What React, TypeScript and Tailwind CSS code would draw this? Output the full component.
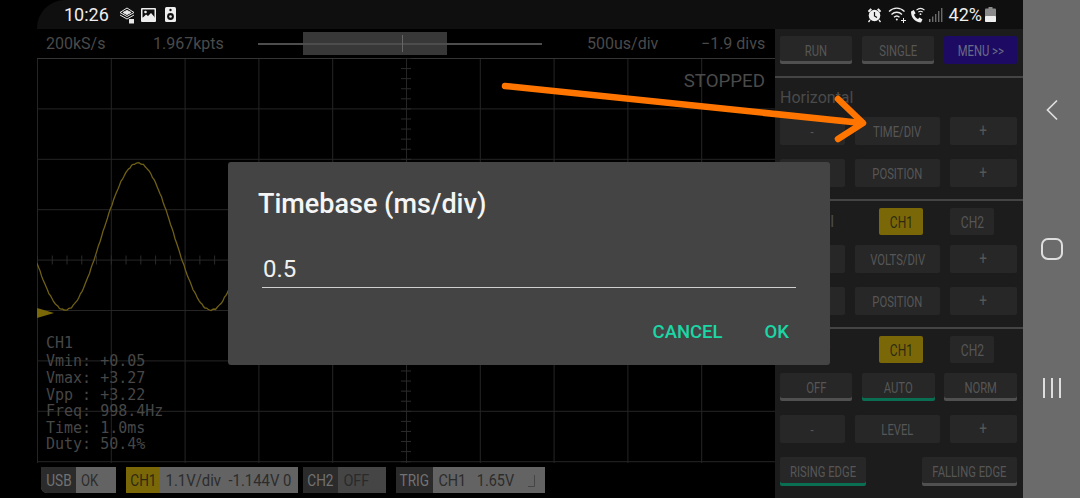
import React from "react";

const gridX = Array.from({ length: 11 }, (_, i) => 0.5 + i * 73.8);
const gridY = Array.from({ length: 9 }, (_, i) => 0.5 + i * 50.4);
const ticksX = Array.from({ length: 51 }, (_, i) => 0.5 + i * 14.76);
const ticksY = Array.from({ length: 41 }, (_, i) => 0.5 + i * 10.08);

const wave = (() => {
  const pts: string[] = [];
  for (let x = 37; x <= 232; x += 1.5) {
    const noise = Math.sin(x * 3.1) * 0.5 + Math.sin(x * 1.7) * 0.3;
    const y = 236.5 - 73.5 * Math.cos((2 * Math.PI * (x - 138)) / 146) + noise;
    pts.push(`${(x - 37).toFixed(1)},${(y - 58).toFixed(1)}`);
  }
  return pts.join(" ");
})();

function Btn({ w, h = "h-[28px]", children, active, line, purple, grow }: { w: string; h?: string; children?: React.ReactNode; active?: boolean; line?: "gray" | "green"; purple?: boolean; grow?: boolean }) {
  const tone = active ? "bg-[#7a6808] text-[#2e2a10]" : purple ? "bg-[#1c0a63] text-[#6b6b85]" : "bg-[#272727] text-[#565656]";
  const border = line === "gray" ? "shadow-[inset_0_-3px_0_#505050]" : line === "green" ? "shadow-[inset_0_-3px_0_#0a6f52]" : "";
  return (
    <div className={`${w} ${h} ${tone} ${border} ${grow ? "ml-auto" : ""} flex items-center justify-center rounded-[2px] pt-[2px] text-[15px]`}>
      <span className="inline-block scale-x-[0.75] whitespace-nowrap">{children}</span>
    </div>
  );
}

function Row3({ label }: { label: string }) {
  return (
    <div className="flex justify-between">
      <Btn w="w-[65px]">-</Btn>
      <Btn w="w-[85px]">{label}</Btn>
      <Btn w="w-[67px]"><span className="text-[18px] leading-[18px]">+</span></Btn>
    </div>
  );
}

function ChRow({ label }: { label: string }) {
  return (
    <div className="flex h-[27px] items-center">
      <div className="w-[99px] text-[16px] text-[#4a4a4a]">{label}</div>
      <Btn w="w-[44px]" h="h-[27px]" active><span className="text-[16px]">CH1</span></Btn>
      <div className="w-[27px]" />
      <Btn w="w-[44px]" h="h-[27px]"><span className="text-[16px]">CH2</span></Btn>
    </div>
  );
}

const Sep = () => <div className="h-[2px] bg-[#444444]" />;

function Tag({ w, children, active, corner }: { w: string; children: React.ReactNode; active?: boolean; corner?: boolean }) {
  return (
    <div className={`${w} ${active ? "bg-[#7a6808] text-[#2e2a10]" : "bg-[#2b2b2b] text-[#727272]"} ${corner ? "rounded-bl-[6px]" : ""} shrink-0 text-center text-[16px]`}>
      <span className="inline-block scale-x-[0.85]">{children}</span>
    </div>
  );
}

function StatusLeftIcons() {
  return (
    <div className="ml-[10px] flex items-center">
      <svg width="16" height="18" viewBox="0 0 16 18" fill="none" stroke="#e8e8e8" strokeWidth="1">
        <path d="M8 2 15 6.5 8 10.5 1 6.5Z" />
        <path d="M4 6.5 8 4.5 12 6.5 8 8.5Z" fill="#e8e8e8" />
        <path d="M1 9 8 13 15 9" />
        <rect x="10" y="13" width="5" height="4.5" fill="#e8e8e8" stroke="none" />
      </svg>
      <svg className="ml-[6px]" width="15" height="14" viewBox="0 0 15 14">
        <rect width="15" height="14" rx="1" fill="#eeeeee" />
        <rect x="1.5" y="1.5" width="12" height="8" fill="#0f0f0f" />
        <circle cx="4.5" cy="4" r="1.3" fill="#eeeeee" />
        <path d="M1.5 10 5 6.5 7 8 10 5 13.5 9V11H1.5Z" fill="#eeeeee" />
      </svg>
      <svg className="ml-[9px]" width="11" height="15" viewBox="0 0 11 15">
        <rect width="11" height="15" rx="1.5" fill="#eeeeee" />
        <circle cx="5.5" cy="3" r="1.2" fill="#0f0f0f" />
        <circle cx="5.5" cy="9.5" r="3.4" fill="#0f0f0f" />
        <circle cx="5.5" cy="9.5" r="1.3" fill="#eeeeee" />
      </svg>
    </div>
  );
}

function StatusRightIcons() {
  return (
    <div className="flex items-center">
      <svg width="15" height="16" viewBox="0 0 15 16" fill="none">
        <circle cx="7.5" cy="8.5" r="5.8" fill="#eeeeee" />
        <path d="M7.5 5V9L10 10.5" stroke="#0f0f0f" strokeWidth="1.2" />
        <path d="M0.8 4 3.5 1.2 5 2.5 2.2 5.5ZM14.2 4 11.5 1.2 10 2.5 12.8 5.5Z" fill="#eeeeee" />
        <path d="M3 13 1.5 15M12 13l1.5 2" stroke="#eeeeee" strokeWidth="1.3" />
      </svg>
      <svg className="ml-[6px]" width="19" height="17" viewBox="0 0 19 17" fill="none" stroke="#eeeeee" strokeWidth="1.3">
        <path d="M1 5.5C5.5 1 12 1 16.5 5.5" />
        <path d="M3.5 8.5C6.5 5.5 11 5.5 14 8.5" />
        <path d="M6 11.3C7.8 9.6 9.8 9.6 11.5 11.3" />
        <circle cx="8.8" cy="13.6" r="1" fill="#eeeeee" stroke="none" />
        <path d="M13 14.5H18M15.5 12V17" strokeWidth="1" />
      </svg>
      <svg className="ml-[3px]" width="15" height="16" viewBox="0 0 15 16" fill="none">
        <path d="M1 4.5C1 11 5 15 11 15.5L12.5 12.5 9.5 10.5 8 12C6 11 4.8 9.6 4 7.8L5.6 6.3 3.8 3Z" fill="#eeeeee" />
        <path d="M6.5 3.2C9 1 12 1 14.5 3.2M8.3 5.2C9.8 3.9 11.3 3.9 12.8 5.2" stroke="#eeeeee" strokeWidth="1.1" />
        <circle cx="10.5" cy="7.2" r="0.9" fill="#eeeeee" />
      </svg>
      <svg className="ml-[4px]" width="14" height="14" viewBox="0 0 14 14">
        <rect x="0" y="11" width="1.4" height="3" fill="#8a8a8a" />
        <rect x="3" y="8.5" width="1.4" height="5.5" fill="#6a6a6a" />
        <rect x="6" y="6" width="1.4" height="8" fill="#6a6a6a" />
        <rect x="9" y="3" width="1.4" height="11" fill="#6a6a6a" />
        <rect x="12" y="0" width="1.4" height="14" fill="#6a6a6a" />
      </svg>
      <span className="ml-[6px] text-[18px] leading-none text-[#eeeeee]">42%</span>
      <svg className="ml-[3px]" width="11" height="15" viewBox="0 0 11 15">
        <rect x="3.5" y="0" width="4" height="2" fill="#8a8a8a" />
        <rect x="0" y="1.5" width="11" height="13.5" rx="1" fill="#8a8a8a" />
        <rect x="0" y="9" width="11" height="6" rx="1" fill="#eeeeee" />
      </svg>
    </div>
  );
}

export default function App() {
  return (
    <div className="relative flex h-[498px] w-[1080px] overflow-hidden bg-black font-['Roboto',sans-serif]">
      <div className="flex w-[1023px] flex-col">
        {/* status bar */}
        <div className="ml-[37px] flex h-[29px] shrink-0 items-center rounded-tl-[28px] bg-[#0f0f0f] pl-[27px] pr-[27px]">
          <span className="text-[18px] leading-none text-[#eeeeee]">10:26</span>
          <StatusLeftIcons />
          <div className="ml-auto">
            <StatusRightIcons />
          </div>
        </div>

        <div className="flex min-h-0 flex-1">
          {/* scope */}
          <div className="flex w-[775px] shrink-0 flex-col pl-[37px]">
            <div className="flex h-[29px] shrink-0 items-center text-[16px] text-[#4a4a4a]">
              <span className="ml-[9px] w-[107px]">200kS/s</span>
              <span className="w-[105px]">1.967kpts</span>
              <div className="relative h-[23px] w-[284px]">
                <div className="absolute left-[45px] top-0 h-[23px] w-[144px] bg-[#383838]" />
                <div className="absolute left-0 right-0 top-[10.5px] h-[2px] bg-[#4d4d4d]" />
                <div className="absolute left-[144px] top-[3px] h-[17px] w-[1px] bg-[#666666]" />
              </div>
              <span className="ml-[45px] w-[114px]">500us/div</span>
              <span>−1.9 divs</span>
            </div>

            <div className="relative h-[405px] shrink-0">
              <svg className="block" width="738" height="405" viewBox="0 0 738 405">
                {gridX.map((x) => (
                  <line key={x} x1={x} x2={x} y1="0" y2="405" stroke="#252525" />
                ))}
                {gridY.map((y, i) => (
                  <line key={y} x1="0" x2="738" y1={y} y2={y} stroke={i === 0 ? "#343434" : "#252525"} />
                ))}
                {ticksX.map((x) => (
                  <line key={x} x1={x} x2={x} y1="197.5" y2="206.5" stroke="#2b2b2b" />
                ))}
                {ticksY.map((y) => (
                  <line key={y} x1="364" x2="374" y1={y} y2={y} stroke="#2b2b2b" />
                ))}
                <polyline points={wave} fill="none" stroke="#6f6016" strokeWidth="1.3" />
                <path d="M0 250 17 255 0 260Z" fill="#7a6808" />
              </svg>
              <div className="absolute right-[10px] top-[12px] text-[18.7px] leading-[22px] text-[#4a4a4a]">STOPPED</div>
              <div className="absolute bottom-[10px] left-[9px] font-['DejaVu_Sans_Mono',monospace] text-[15px] leading-[16.6px] whitespace-pre text-[#474747]">
                <div className="mb-[2px]">CH1</div>
                <div>Vmin: +0.05</div>
                <div>Vmax: +3.27</div>
                <div>Vpp : +3.22</div>
                <div>Freq: 998.4Hz</div>
                <div>Time: 1.0ms</div>
                <div>Duty: 50.4%</div>
              </div>
            </div>

            {/* bottom chips */}
            <div className="mt-[4px] flex h-[26px] items-stretch text-[16px] leading-[27px] whitespace-pre text-[#2c2c2c]">
              <div className="ml-[4px] flex w-[75px] rounded-bl-[6px] bg-[#636363]">
                <Tag w="w-[35px]" corner>USB</Tag>
                <span className="inline-block origin-left scale-x-[0.82] pl-[6px]">OK</span>
              </div>
              <div className="ml-[10px] flex w-[172px] bg-[#636363]">
                <Tag w="w-[34px]" active>CH1</Tag>
                <span className="inline-block origin-left scale-x-[0.93] pl-[6px]">1.1V/div  -1.144V 0</span>
              </div>
              <div className="ml-[5px] flex w-[83px] bg-[#454545]">
                <Tag w="w-[35px]">CH2</Tag>
                <span className="inline-block origin-left scale-x-[0.9] pl-[6px] text-[#2a2a2a]">OFF</span>
              </div>
              <div className="ml-[10px] flex w-[149px] bg-[#636363]">
                <Tag w="w-[37px]">TRIG</Tag>
                <span className="inline-block w-[95px] origin-left scale-x-[0.9] pl-[6px]">CH1   1.65V</span>
                <svg className="mt-[8px]" width="8" height="12" viewBox="0 0 8 12" fill="none" stroke="#454545" strokeWidth="1">
                  <path d="M0 11.5H6.5V0" />
                </svg>
              </div>
            </div>
          </div>

          {/* control panel */}
          <div className="flex w-[248px] shrink-0 flex-col bg-[#1c1c1c]">
            <div className="pb-[12px] pl-[5px] pr-[6px] pt-[7px]">
              <div className="flex justify-between">
                <Btn w="w-[72px]" line="gray">RUN</Btn>
                <Btn w="w-[72px]" line="gray">SINGLE</Btn>
                <Btn w="w-[73px]" purple>MENU &gt;&gt;</Btn>
              </div>
            </div>
            <Sep />
            <div className="pb-[12px] pl-[5px] pr-[6px]">
              <div className="flex h-[39px] items-center text-[16px] text-[#4a4a4a]">Horizontal</div>
              <div className="flex flex-col gap-[14px]">
                <Row3 label="TIME/DIV" />
                <Row3 label="POSITION" />
              </div>
            </div>
            <Sep />
            <div className="pb-[12px] pl-[5px] pr-[6px] pt-[7px]">
              <ChRow label="Vertical" />
              <div className="mt-[10px] flex flex-col gap-[14px]">
                <Row3 label="VOLTS/DIV" />
                <Row3 label="POSITION" />
              </div>
            </div>
            <Sep />
            <div className="pl-[5px] pr-[6px] pt-[7px]">
              <ChRow label="Trigger" />
              <div className="mt-[10px] flex justify-between">
                <Btn w="w-[72px]" line="gray">OFF</Btn>
                <Btn w="w-[73px]" line="green">AUTO</Btn>
                <Btn w="w-[73px]" line="gray">NORM</Btn>
              </div>
              <div className="mt-[14px]">
                <Row3 label="LEVEL" />
              </div>
              <div className="mt-[14px] flex">
                <Btn w="w-[86px]" h="h-[29px]" line="green">RISING EDGE</Btn>
                <Btn w="w-[95px]" h="h-[29px]" line="gray" grow>FALLING EDGE</Btn>
              </div>
            </div>
          </div>
        </div>
      </div>

      {/* nav bar */}
      <div className="flex w-[57px] shrink-0 flex-col items-center bg-[#6b6b6b] text-[#dedede]">
        <svg className="mt-[99px]" width="14" height="22" viewBox="0 0 14 22" fill="none" stroke="currentColor" strokeWidth="1.7">
          <path d="M12 1.5 2.5 11 12 20.5" />
        </svg>
        <svg className="mt-[117px]" width="22" height="22" viewBox="0 0 22 22" fill="none" stroke="currentColor" strokeWidth="2">
          <rect x="1" y="1" width="20" height="20" rx="6" />
        </svg>
        <svg className="mt-[118px]" width="20" height="20" viewBox="0 0 20 20" fill="none" stroke="currentColor" strokeWidth="2">
          <path d="M2 0V20M10 0V20M18 0V20" />
        </svg>
      </div>

      {/* dialog */}
      <div className="absolute left-[228px] top-[162px] flex h-[203px] w-[602px] flex-col rounded-[3px] bg-[#444444]">
        <div className="ml-[30px] mt-[24px] text-[27px] font-medium leading-[36px] text-[#f5f5f5]">Timebase (ms/div)</div>
        <div className="mx-[34px] mt-[26px] h-[40px] border-b-[1.5px] border-[#d0d0d0] pl-[1px] text-[24px] leading-[42px] text-[#f0f0f0]">0.5</div>
        <div className="mr-[41px] mt-[32px] flex justify-end gap-[42px] text-[18.5px] font-medium leading-[24px] text-[#1bd6a5]">
          <span>CANCEL</span>
          <span>OK</span>
        </div>
      </div>

      {/* annotation arrow */}
      <svg className="pointer-events-none absolute left-0 top-0" width="1080" height="498" viewBox="0 0 1080 498" fill="none" stroke="#ff7500" strokeWidth="6.5" strokeLinecap="round" strokeLinejoin="round">
        <path d="M505 86 862 123" />
        <path d="M838 99 863 123 838 139" />
      </svg>
    </div>
  );
}
